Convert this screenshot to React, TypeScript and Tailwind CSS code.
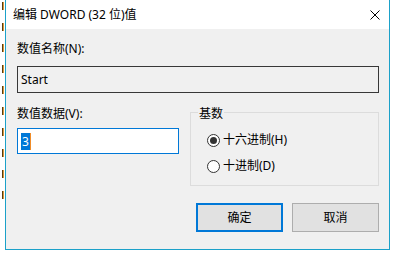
import React from 'react';

const marks = Array.from({ length: 10 });

function Radio({ checked, label }: { checked?: boolean; label: string }) {
  return (
    <div className="flex h-[16px] items-center gap-[3px]">
      <span className="flex h-[13px] w-[13px] items-center justify-center rounded-full border border-[#333333] bg-white">
        {checked && <span className="h-[7px] w-[7px] rounded-full bg-[#333333]" />}
      </span>
      <span className="leading-[16px]">{label}</span>
    </div>
  );
}

export default function App() {
  return (
    <div className="flex h-[254px] w-[393px] bg-white font-['Noto_Sans','Noto_Sans_CJK_SC',sans-serif] text-[12px] text-black">
      {/* what is left of the registry list behind the dialog */}
      <div className="flex w-[5px] flex-col gap-[13px] pt-[2px]">
        {marks.map((_, i) => (
          <div key={i} className="ml-[2px] flex h-[8px]">
            <span className="w-[1px] bg-[#5b3a0f]" />
            <span className="w-[1px] bg-[#d79a3a]" />
          </div>
        ))}
      </div>

      <div className="flex h-[250px] w-[385px] flex-col border-x border-b border-[#1ba1c9]">
        {/* Title bar */}
        <div className="flex h-[29px] items-center justify-between bg-white pl-[7px] pr-[9px]">
          <span className="leading-[16px]">编辑 DWORD (32 位)值</span>
          <svg width="10" height="10" viewBox="0 0 10 10" className="mt-[1px]">
            <path d="M0.5 0.5 L9.5 9.5 M9.5 0.5 L0.5 9.5" stroke="#000" strokeWidth="1" fill="none" />
          </svg>
        </div>

        {/* Body */}
        <div className="flex flex-1 flex-col bg-[#f0f0f0] pl-[11px] pr-[10px] pt-[12px]">
          <span className="leading-[16px]">数值名称(N):</span>
          <div className="mt-[9px] flex h-[27px] items-center border border-[#383838] bg-[#f0f0f0] pl-[3px]">
            <span className="leading-[16px]">Start</span>
          </div>

          <div className="flex gap-[11px]">
            <div className="flex w-[162px] flex-col">
              <span className="mt-[13px] leading-[16px]">数值数据(V):</span>
              <div className="mt-[6px] flex h-[26px] items-center border border-[#0078d7] bg-white pl-[3px]">
                <span className="h-[17px] bg-[#0078d7] px-[1px] leading-[17px] text-white">3</span>
                <span className="h-[17px] w-[1px] bg-[#f08c28]" />
              </div>
            </div>

            <div className="relative mt-[19px] flex h-[74px] flex-1 flex-col gap-[10px] border border-[#dcdcdc] pl-[16px] pt-[19px]">
              <span className="absolute left-[7px] top-[-7px] bg-[#f0f0f0] px-[1px] leading-[16px]">基数</span>
              <Radio checked label="十六进制(H)" />
              <Radio label="十进制(D)" />
            </div>
          </div>

          <div className="mt-[17px] flex justify-end gap-[9px]">
            <button className="flex h-[29px] w-[87px] items-center justify-center border-2 border-[#0078d7] bg-[#e1e1e1] leading-[16px]">
              确定
            </button>
            <button className="flex h-[29px] w-[87px] items-center justify-center border border-[#adadad] bg-[#e1e1e1] leading-[16px]">
              取消
            </button>
          </div>
        </div>
      </div>
    </div>
  );
}
